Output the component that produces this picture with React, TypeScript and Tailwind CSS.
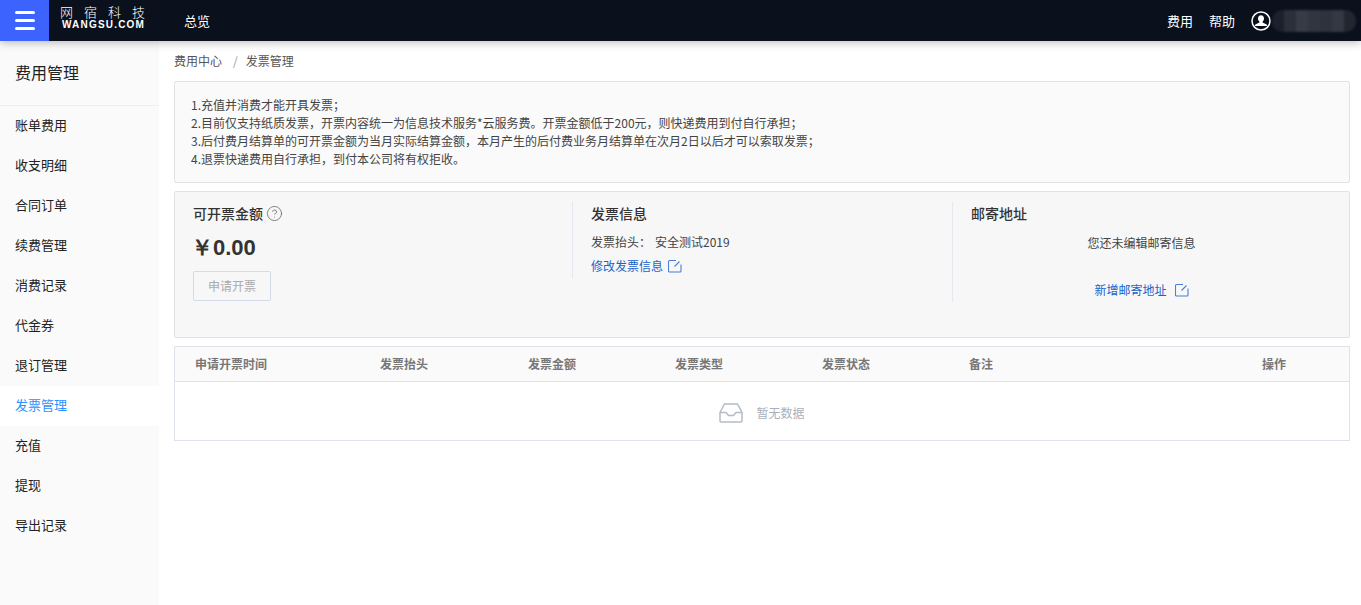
import { CircleHelp } from "lucide-react";

const menu = ["账单费用", "收支明细", "合同订单", "续费管理", "消费记录", "代金券", "退订管理", "发票管理", "充值", "提现", "导出记录"];
const notices = [
  "1.充值并消费才能开具发票；",
  "2.目前仅支持纸质发票，开票内容统一为信息技术服务*云服务费。开票金额低于200元，则快递费用到付自行承担；",
  "3.后付费月结算单的可开票金额为当月实际结算金额，本月产生的后付费业务月结算单在次月2日以后才可以索取发票；",
  "4.退票快递费用自行承担，到付本公司将有权拒收。",
];
const columns = ["申请开票时间", "发票抬头", "发票金额", "发票类型", "发票状态", "备注", "操作"];
const blur = ["#1b212c", "#2a2f3a", "#363b45", "#30353f", "#2e323c", "#333843", "#22262f"];

function EditIcon() {
  return (
    <svg width="14" height="14" viewBox="0 0 14 14" fill="none" stroke="#4a7fd6" strokeWidth="1.1">
      <path d="M8 1.5H1.5a1 1 0 0 0-1 1v9.5a1 1 0 0 0 1 1H12a1 1 0 0 0 1-1V5.5" />
      <path d="M6.5 7.5 11.5 2.5" />
    </svg>
  );
}

function InboxIcon() {
  return (
    <svg width="24" height="20" viewBox="0 0 24 20" fill="none" stroke="#b4bbc6" strokeWidth="1.5">
      <path d="M1 9.5 5.5 1h13L23 9.5V18a1 1 0 0 1-1 1H2a1 1 0 0 1-1-1Z" />
      <path d="M1 9.5h6l2.5 3h5l2.5-3h6" />
    </svg>
  );
}

function UserIcon() {
  return (
    <svg width="20" height="20" viewBox="0 0 20 20">
      <circle cx="10" cy="10" r="9" fill="#0a101c" stroke="#ffffff" strokeWidth="1.5" />
      <path d="M10 4.2c-1.9 0-3 1.4-3 3.2 0 1.3.6 2.4 1.4 3v1.2l-3.6 1.6c-.5.3-.8.7-.8 1.3v.6h12v-.6c0-.6-.3-1-.8-1.3l-3.6-1.6v-1.2c.8-.6 1.4-1.7 1.4-3 0-1.8-1.1-3.2-3-3.2Z" fill="#ffffff" />
    </svg>
  );
}

export default function App() {
  return (
    <div className="h-[605px] w-[1361px] overflow-hidden bg-white font-['Noto_Sans_CJK_SC','Liberation_Sans',sans-serif] text-[12px] text-[#333]">
      {/* Top bar */}
      <header className="relative z-10 flex h-[41px] items-center bg-[#0a101c] shadow-[0_2px_8px_rgba(0,0,0,0.25)]">
        <div className="flex h-full w-[49px] flex-col items-center justify-center gap-[5px] bg-[#3d63ff]">
          <span className="h-[3px] w-5 rounded-sm bg-white" />
          <span className="h-[3px] w-5 rounded-sm bg-white" />
          <span className="h-[3px] w-5 rounded-sm bg-white" />
        </div>
        <div className="mb-[7px] ml-[11px] flex w-[87px] flex-col items-start gap-[2px] text-white">
          <span className="text-[13px] leading-[13px] font-extralight tracking-[11px] whitespace-nowrap">网宿科技</span>
          <span className="ml-[2px] font-['Liberation_Sans',sans-serif] text-[10px] leading-[9px] font-bold tracking-[1.2px] whitespace-nowrap">WANGSU.COM</span>
        </div>
        <span className="ml-[37px] text-[13px] text-white">总览</span>
        <div className="ml-auto flex items-center text-[13px] text-white">
          <span>费用</span>
          <span className="ml-[16px]">帮助</span>
          <span className="ml-[16px]"><UserIcon /></span>
          <div className="mr-[5px] ml-[1px] flex h-[22px] w-[84px] overflow-hidden rounded-[10px] blur-[1px]">
            {blur.map((c, i) => (
              <span key={i} className="h-full flex-1" style={{ backgroundColor: c }} />
            ))}
          </div>
        </div>
      </header>

      <div className="flex h-[564px]">
        {/* Sidebar */}
        <aside className="w-[159px] shrink-0 bg-[#fafafa] text-[13px] leading-5 text-[#222]">
          <div className="flex h-[65px] items-center border-b border-[#eeeeee] pb-[2px] pl-[15px] text-[16px] leading-none">费用管理</div>
          {menu.map((item) => (
            <div key={item} className={item === "发票管理" ? "flex h-10 items-center bg-white pb-[2px] pl-[15px] text-[#2f8fff]" : "flex h-10 items-center pb-[2px] pl-[15px]"}>
              {item}
            </div>
          ))}
        </aside>

        {/* Main */}
        <main className="flex-1 pr-[11px] pl-[15px]">
          <div className="flex h-10 items-center text-[#555]">
            <span>费用中心</span>
            <span className="mr-[8px] ml-[11px] text-[#999]">/</span>
            <span>发票管理</span>
          </div>

          <div className="h-[102px] rounded-[2px] border border-[#e2e2e2] bg-[#fafafa] px-4 pt-[14px] leading-[18px] text-[#444]">
            {notices.map((n) => (
              <p key={n}>{n}</p>
            ))}
          </div>

          <div className="mt-2 flex h-[147px] rounded-[2px] border border-[#e2e2e2] bg-[#f7f7f7] pt-[10px]">
            <div className="w-[397px] pl-[18px]">
              <div className="flex h-[22px] items-center gap-[3px] text-[14px] font-medium text-[#333]">
                可开票金额
                <CircleHelp size={17} strokeWidth={1} className="text-[#555]" />
              </div>
              <div className="mt-2 font-['Liberation_Sans',sans-serif] text-[22px] leading-[32px] font-bold text-[#333]">
                <span className="ml-[-2px]">￥</span>0.00
              </div>
              <button className="mt-[7px] h-[30px] w-[78px] rounded-[2px] border border-[#d3dce8] bg-[#f7f7f7] text-[12px] text-[#aaa]">申请开票</button>
            </div>

            <div className="h-[76px] w-[380px] border-l border-[#e4e9f0] pl-[18px]">
              <div className="flex h-[22px] items-center text-[14px] font-medium">发票信息</div>
              <p className="mt-2 flex gap-[2px] leading-[20px] text-[#444]"><span>发票抬头：</span><span className="ml-[2px]">安全测试2019</span></p>
              <div className="mt-1 flex items-center gap-[5px] leading-[20px] text-[#1a64c8]">
                修改发票信息
                <EditIcon />
              </div>
            </div>

            <div className="h-[100px] flex-1 border-l border-[#e4e9f0] pl-[18px]">
              <div className="flex h-[22px] items-center text-[14px] font-medium">邮寄地址</div>
              <div className="flex flex-col items-center pr-[19px]">
                <p className="mt-[9px] ml-[-18px] leading-[20px] text-[#444]">您还未编辑邮寄信息</p>
                <div className="mt-[27px] ml-[-18px] flex items-center gap-2 leading-[20px] text-[#1a64c8]">
                  新增邮寄地址
                  <EditIcon />
                </div>
              </div>
            </div>
          </div>

          <div className="mt-2 border border-[#dfe4ec]">
            <div className="grid h-[35px] grid-cols-[185px_148px_147px_147px_147px_293px_1fr] items-center border-b border-[#dfe4ec] bg-[#fafafa] pl-5 font-bold text-[#777]">
              {columns.map((c) => (
                <span key={c}>{c}</span>
              ))}
            </div>
            <div className="flex h-[58px] items-center justify-center gap-[13px] pt-[4px] text-[#aab0ba]">
              <InboxIcon />
              暂无数据
            </div>
          </div>
        </main>
      </div>
    </div>
  );
}
